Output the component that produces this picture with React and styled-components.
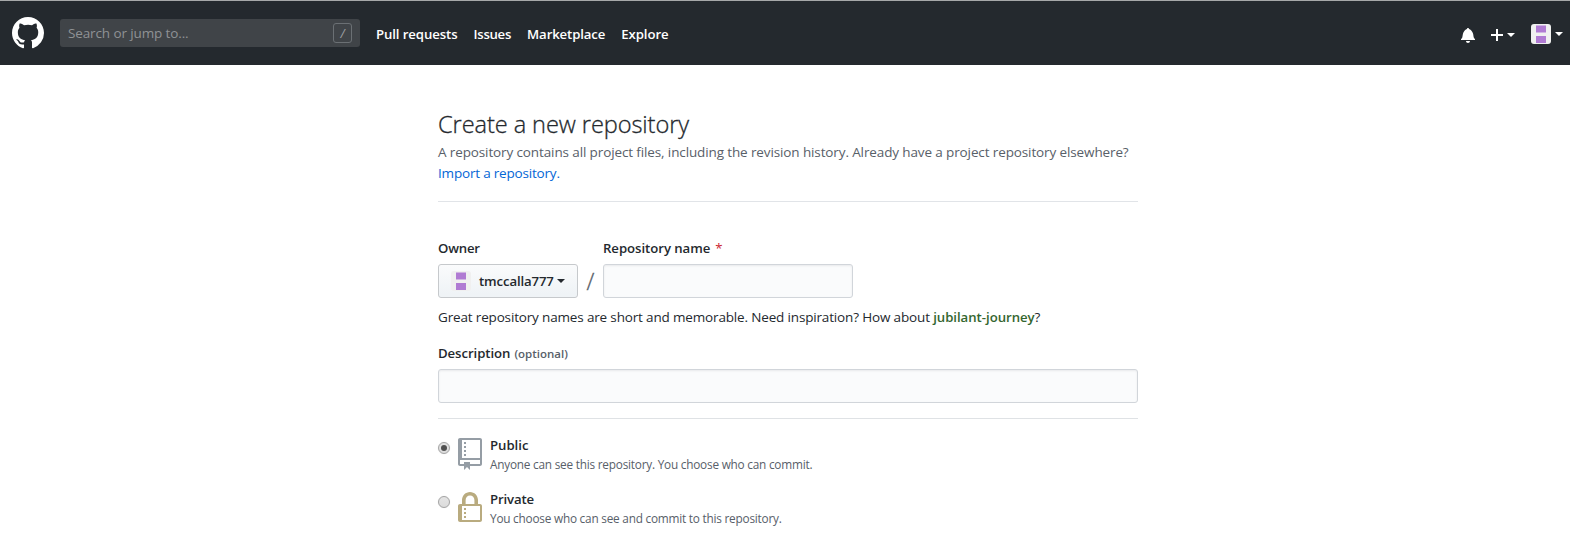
import React from 'react';
import styled, { createGlobalStyle } from 'styled-components';

const GlobalStyle = createGlobalStyle`
  *, *::before, *::after { box-sizing: border-box; }
  body {
    margin: 0;
    background: #fff;
    color: #24292e;
    font-family: "Segoe UI", "Open Sans", "Noto Sans", sans-serif;
    font-size: 13.5px;
    line-height: 21px;
  }
`;

const tracking = ({ $track = 0 }) => `letter-spacing: ${$track}px;`;

/* ---------- Header ---------- */

const Header = styled.header`
  display: flex;
  align-items: center;
  height: 65px;
  padding: 0 7px 0 12px;
  background: #24292e;
  border-top: 1px solid #a6a8a9;
  color: #fff;
`;

const Logo = styled.svg`
  display: block;
  flex: none;
  width: 32px;
  height: 32px;
  fill: #fff;
  margin-right: 16px;
`;

const Search = styled.div`
  display: flex;
  align-items: center;
  justify-content: space-between;
  width: 300px;
  height: 28px;
  padding: 0 8px;
  border-radius: 3px;
  background: #404448;
  color: #8f9295;
  letter-spacing: -0.12px;
`;

const SlashKey = styled.kbd`
  display: flex;
  align-items: center;
  justify-content: center;
  width: 19px;
  height: 20px;
  border: 1px solid #6b7074;
  border-radius: 3px;
  font-family: inherit;
  font-size: 12px;
  font-weight: 400;
  font-style: italic;
  color: #a0a3a6;
`;

const Nav = styled.nav`
  display: flex;
  gap: 16px;
  margin-left: 16px;
  padding-top: 2px;
`;

const NavLink = styled.a`
  color: #fff;
  font-size: 13.2px;
  font-weight: 600;
  ${tracking}
`;

const HeaderActions = styled.div`
  display: flex;
  align-items: center;
  margin-left: auto;
  padding-top: 4px;
`;

const HeaderIcon = styled.svg`
  display: block;
  width: ${({ $width }) => $width}px;
  height: 16px;
  fill: #fff;
  margin-right: ${({ $gap }) => $gap}px;
`;

const Caret = styled.span`
  width: 8px;
  height: 4px;
  border: 4px solid transparent;
  border-top-color: currentColor;
  border-bottom: 0;
  margin-right: ${({ $gap = 0 }) => $gap}px;
`;

const AvatarFrame = styled.svg`
  display: block;
  width: 20px;
  height: 20px;
  border-radius: 3px;
  margin-right: ${({ $gap }) => $gap}px;
`;

const AccountMenu = styled.div`
  display: flex;
  align-items: center;
  height: 20px;
  margin-top: -2px;
`;

/* ---------- Page ---------- */

const Page = styled.main`
  width: 700px;
  margin: 40px 0 0 438px;
`;

const Intro = styled.section`
  height: 97px;
  border-bottom: 1px solid #e1e4e8;
`;

const Title = styled.h1`
  margin: 0;
  padding-top: 1px;
  font-size: 23.6px;
  font-weight: 300;
  line-height: 36px;
  letter-spacing: -0.09px;
  -webkit-text-stroke: 0.3px currentColor;
`;

const Lead = styled.p`
  margin: 0;
  color: #586069;
  white-space: nowrap;
  ${tracking}
`;

const Link = styled.a`
  color: #0366d6;
`;

const FieldRow = styled.div`
  display: flex;
  align-items: flex-end;
  margin-top: 36px;
`;

const Field = styled.div`
  display: flex;
  flex-direction: column;
  gap: 5px;
`;

const Label = styled.label`
  font-size: 13.2px;
  font-weight: 600;
  ${tracking}
`;

const Required = styled.span`
  margin-left: 5px;
  color: #cb2431;
  font-weight: 400;
`;

const Optional = styled.span`
  margin-left: 4px;
  color: #586069;
  font-size: 11.5px;
  font-weight: 600;
  letter-spacing: 0;
`;

const OwnerButton = styled.button`
  display: flex;
  align-items: center;
  width: 140px;
  height: 34px;
  padding: 0 0 0 12px;
  border: 1px solid #c6c9cc;
  border-radius: 3px;
  background: linear-gradient(180deg, #fafbfc, #eff3f6 90%);
  color: #24292e;
  font: 600 13.2px/21px "Segoe UI", "Open Sans", "Noto Sans", sans-serif;
  letter-spacing: -0.13px;
`;

const OwnerName = styled.span`
  width: 78px;
  text-align: left;
`;

const Separator = styled.span`
  width: 25px;
  height: 34px;
  text-align: center;
  color: #586069;
  font-size: 23px;
  font-weight: 300;
  line-height: 34px;
  -webkit-text-stroke: 0.3px currentColor;
`;

const Input = styled.input`
  display: block;
  width: ${({ $width }) => $width};
  height: 34px;
  padding: 6px 8px;
  border: 1px solid #d1d5da;
  border-radius: 3px;
  background: #fafbfc;
  box-shadow: inset 0 1px 2px rgba(27, 31, 35, 0.075);
  outline: none;
  font: inherit;
`;

const Hint = styled.p`
  margin: 9px 0 15px;
  white-space: nowrap;
  letter-spacing: -0.16px;
`;

const Suggestion = styled.strong`
  color: #34662f;
  font-size: 13.2px;
  font-weight: 600;
  letter-spacing: -0.03px;
`;

const Choices = styled.div`
  display: flex;
  flex-direction: column;
  gap: 16px;
  margin-top: 15px;
  padding-top: 15px;
  border-top: 1px solid #dfe2e5;
`;

const Choice = styled.label`
  display: flex;
  align-items: flex-start;
`;

const Radio = styled.span`
  flex: none;
  display: flex;
  align-items: center;
  justify-content: center;
  width: 12px;
  height: 12px;
  margin: 8px 8px 0 0;
  border: 1px solid #a3a3a3;
  border-radius: 50%;
  background: linear-gradient(180deg, #e4e4e4, #dcdcdc);
  box-shadow: 0 0 1px rgba(0, 0, 0, 0.15);

  &::after {
    content: "";
    width: 6px;
    height: 6px;
    border-radius: 50%;
    background: ${({ $checked }) => ($checked ? '#505050' : 'transparent')};
  }
`;

const ChoiceIcon = styled.svg`
  flex: none;
  display: block;
  width: 24px;
  height: 32px;
  margin: 4px 8px 0 0;
  fill: ${({ $color }) => $color};
`;

const ChoiceBody = styled.div`
  padding-top: 1px;
`;

const ChoiceTitle = styled.div`
  font-size: 13.2px;
  font-weight: 600;
  ${tracking}
`;

const ChoiceText = styled.div`
  color: #586069;
  font-size: 11.8px;
  line-height: 16px;
  letter-spacing: -0.22px;
`;

function Avatar({ gap }) {
  return (
    <AvatarFrame viewBox="0 0 20 20" $gap={gap}>
      <rect width="20" height="20" fill="#f0f0f0" />
      <path d="M5 1.5h10v7H5zM5 12h10v7H5z" fill="#b07bd3" />
    </AvatarFrame>
  );
}

const NAV = [
  ['Pull requests', -0.1],
  ['Issues', -0.28],
  ['Marketplace', -0.13],
  ['Explore', -0.08],
];

const CHOICES = [
  {
    title: 'Public',
    track: -0.03,
    text: 'Anyone can see this repository. You choose who can commit.',
    checked: true,
    color: '#959da5',
    path: 'M4 9H3V8h1v1zm0-3H3v1h1V6zm0-2H3v1h1V4zm0-2H3v1h1V2zm8-1v12c0 .55-.45 1-1 1H6v2l-1.5-1.5L3 16v-2H1c-.55 0-1-.45-1-1V1c0-.55.45-1 1-1h10c.55 0 1 .45 1 1zm-1 10H1v2h2v-1h3v1h5v-2zm0-10H2v9h9V1z',
  },
  {
    title: 'Private',
    track: -0.15,
    text: 'You choose who can see and commit to this repository.',
    checked: false,
    color: '#b9ab7f',
    path: 'M4 13H3v-1h1v1zm8-6v7c0 .55-.45 1-1 1H1c-.55 0-1-.45-1-1V7c0-.55.45-1 1-1h1V4c0-2.2 1.8-4 4-4s4 1.8 4 4v2h1c.55 0 1 .45 1 1zM3.8 6h4.41V4c0-1.22-.98-2.2-2.2-2.2-1.22 0-2.2.98-2.2 2.2v2H3.8zM11 7H2v7h9V7zM4 8H3v1h1V8zm0 2H3v1h1v-1z',
  },
];

export default function App() {
  return (
    <>
      <GlobalStyle />
      <Header>
        <Logo viewBox="0 0 16 16">
          <path
            fillRule="evenodd"
            d="M8 0C3.58 0 0 3.58 0 8c0 3.54 2.29 6.53 5.47 7.59.4.07.55-.17.55-.38 0-.19-.01-.82-.01-1.49-2.01.37-2.53-.49-2.69-.94-.09-.23-.48-.94-.82-1.13-.28-.15-.68-.52-.01-.53.63-.01 1.08.58 1.23.82.72 1.21 1.87.87 2.33.66.07-.52.28-.87.51-1.07-1.78-.2-3.64-.89-3.64-3.95 0-.87.31-1.59.82-2.15-.08-.2-.36-1.02.08-2.12 0 0 .67-.21 2.2.82.64-.18 1.32-.27 2-.27.68 0 1.36.09 2 .27 1.53-1.04 2.2-.82 2.2-.82.44 1.1.16 1.92.08 2.12.51.56.82 1.27.82 2.15 0 3.07-1.87 3.75-3.65 3.95.29.25.54.73.54 1.48 0 1.07-.01 1.93-.01 2.2 0 .21.15.46.55.38A8.013 8.013 0 0 0 16 8c0-4.42-3.58-8-8-8z"
          />
        </Logo>
        <Search>
          <span>Search or jump to...</span>
          <SlashKey>/</SlashKey>
        </Search>
        <Nav>
          {NAV.map(([name, track]) => (
            <NavLink key={name} $track={track}>{name}</NavLink>
          ))}
        </Nav>
        <HeaderActions>
          <HeaderIcon viewBox="0 0 14 16" $width={14} $gap={16}>
            <path d="M13.99 11.991v1H0v-1l.73-.58c.769-.769.809-2.547 1.189-4.416.77-3.767 4.077-4.996 4.077-4.996 0-.55.45-1 .999-1 .55 0 1 .45 1 1 0 0 3.387 1.229 4.156 4.996.38 1.879.42 3.657 1.19 4.417l.659.58h-.01zM6.995 15.99c1.11 0 1.999-.89 1.999-1.999H4.996c0 1.11.89 1.999 1.999 1.999z" />
          </HeaderIcon>
          <HeaderIcon viewBox="0 0 12 16" $width={12} $gap={4}>
            <path d="M12 9H7v5H5V9H0V7h5V2h2v5h5v2z" />
          </HeaderIcon>
          <Caret $gap={16} />
          <AccountMenu>
            <Avatar gap={4} />
            <Caret />
          </AccountMenu>
        </HeaderActions>
      </Header>

      <Page>
        <Intro>
          <Title>Create a new repository</Title>
          <Lead $track={-0.12}>
            A repository contains all project files, including the revision history. Already have a project repository elsewhere?
          </Lead>
          <Lead $track={-0.19}>
            <Link>Import a repository.</Link>
          </Lead>
        </Intro>

        <FieldRow>
          <Field>
            <Label $track={-0.2}>Owner</Label>
            <OwnerButton type="button">
              <Avatar gap={8} />
              <OwnerName>tmccalla777</OwnerName>
              <Caret />
            </OwnerButton>
          </Field>
          <Separator>/</Separator>
          <Field>
            <Label $track={-0.05}>
              Repository name<Required>*</Required>
            </Label>
            <Input type="text" $width="250px" />
          </Field>
        </FieldRow>

        <Hint>
          Great repository names are short and memorable. Need inspiration? How about{' '}
          <Suggestion>jubilant-journey</Suggestion>?
        </Hint>

        <Field>
          <Label $track={-0.07}>
            Description<Optional>(optional)</Optional>
          </Label>
          <Input type="text" $width="100%" />
        </Field>

        <Choices>
          {CHOICES.map(({ title, track, text, checked, color, path }) => (
            <Choice key={title}>
              <Radio $checked={checked} />
              <ChoiceIcon viewBox="0 0 12 16" $color={color}>
                <path fillRule="evenodd" d={path} />
              </ChoiceIcon>
              <ChoiceBody>
                <ChoiceTitle $track={track}>{title}</ChoiceTitle>
                <ChoiceText>{text}</ChoiceText>
              </ChoiceBody>
            </Choice>
          ))}
        </Choices>
      </Page>
    </>
  );
}
